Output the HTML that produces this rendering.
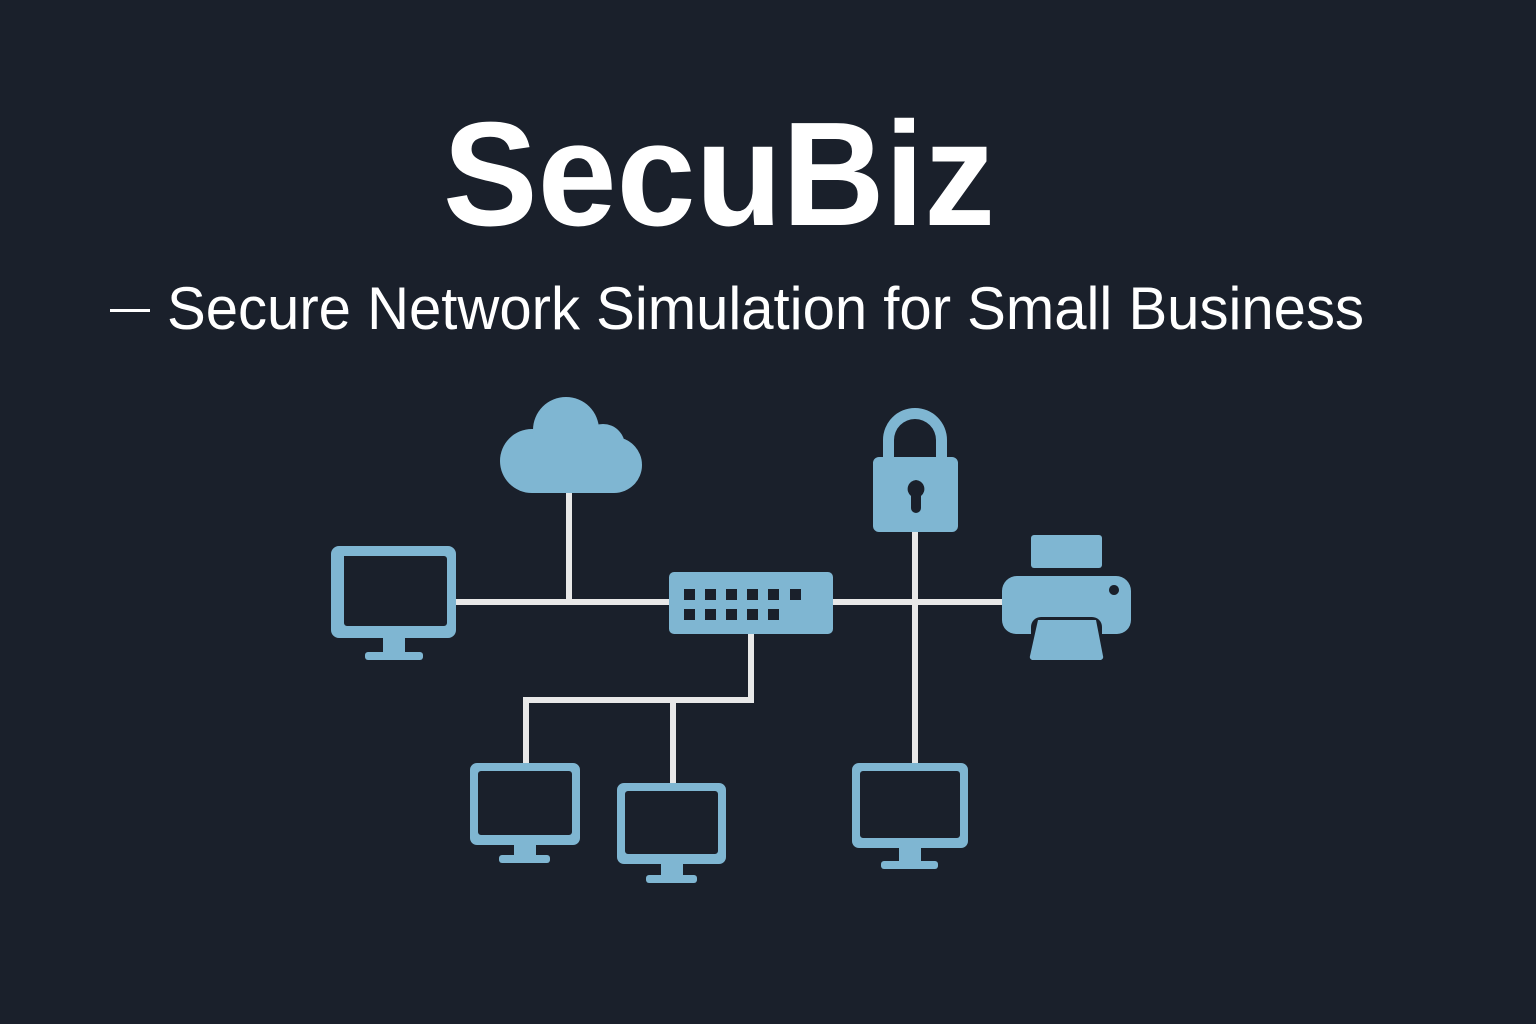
<!DOCTYPE html>
<html><head><meta charset="utf-8"><style>
html,body{margin:0;padding:0;background:#1a202b;}
svg{display:block}
</style></head><body>
<svg width="1536" height="1024" viewBox="0 0 1536 1024" xmlns="http://www.w3.org/2000/svg">
<rect width="1536" height="1024" fill="#1a202b"/>
<text x="443" y="225" font-family="Liberation Sans, sans-serif" font-weight="bold" font-size="148" fill="#ffffff" textLength="552" lengthAdjust="spacingAndGlyphs">SecuBiz</text>
<rect x="110" y="309" width="40" height="3" fill="#ffffff"/>
<text x="167" y="329" font-family="Liberation Sans, sans-serif" font-size="60" fill="#ffffff" textLength="1197" lengthAdjust="spacingAndGlyphs">Secure Network Simulation for Small Business</text>

<g stroke="#e8e8e8" stroke-width="6" fill="none">
<line x1="569" y1="490" x2="569" y2="602"/>
<line x1="455" y1="602" x2="672" y2="602"/>
<line x1="830" y1="602" x2="1005" y2="602"/>
<line x1="915" y1="530" x2="915" y2="765"/>
<polyline points="751,632 751,700 526,700 526,765"/>
<line x1="673" y1="700" x2="673" y2="785"/>
</g>

<g fill="#7fb6d2">
<!-- cloud -->
<circle cx="532" cy="461" r="32"/>
<circle cx="566" cy="430" r="33"/>
<circle cx="603" cy="446" r="22"/>
<circle cx="614" cy="465" r="28"/>
<rect x="532" y="445" width="82" height="48"/>
<!-- left monitor -->
<path fill-rule="evenodd" d="M339,546 H448 A8,8 0 0 1 456,554 V630 A8,8 0 0 1 448,638 H339 A8,8 0 0 1 331,630 V554 A8,8 0 0 1 339,546 Z M344,556 V623 A3,3 0 0 0 347,626 H444 A3,3 0 0 0 447,623 V559 A3,3 0 0 0 444,556 Z"/>
<rect x="383" y="637" width="22" height="17"/>
<rect x="365" y="652" width="58" height="8" rx="3"/>
<!-- switch -->
<rect x="669" y="572" width="164" height="62" rx="5"/>
<!-- lock -->
<path d="M883,460 V440 A32,32 0 0 1 947,440 V460 H936 V440 A21,21 0 0 0 894,440 V460 Z"/>
<path fill-rule="evenodd" d="M879,457 H952 A6,6 0 0 1 958,463 V526 A6,6 0 0 1 952,532 H879 A6,6 0 0 1 873,526 V463 A6,6 0 0 1 879,457 Z M916,480 A9,9 0 0 0 911,496 V508 A4,4 0 0 0 921,508 V496 A9,9 0 0 0 916,480 Z"/>
<!-- printer -->
<rect x="1031" y="535" width="71" height="33" rx="3"/>
<path fill-rule="evenodd" d="M1017,576 H1116 A15,15 0 0 1 1131,591 V620 A14,14 0 0 1 1117,634 H1102 V627 A10,10 0 0 0 1092,617 H1041 A10,10 0 0 0 1031,627 V634 H1016 A14,14 0 0 1 1002,620 V591 A15,15 0 0 1 1017,576 Z M1114,585 A5,5 0 1 0 1114.01,585 Z"/>
<path d="M1038,620 H1096 L1103,656 A3,3 0 0 1 1100,660 H1033 A3,3 0 0 1 1030,656 Z"/>
<!-- bottom monitors -->
<path fill-rule="evenodd" d="M477,763 H573 A7,7 0 0 1 580,770 V838 A7,7 0 0 1 573,845 H477 A7,7 0 0 1 470,838 V770 A7,7 0 0 1 477,763 Z M481,771 A3,3 0 0 0 478,774 V832 A3,3 0 0 0 481,835 H569 A3,3 0 0 0 572,832 V774 A3,3 0 0 0 569,771 Z"/>
<rect x="514" y="844" width="22" height="13"/>
<rect x="499" y="855" width="51" height="8" rx="3"/>
<path fill-rule="evenodd" d="M624,783 H719 A7,7 0 0 1 726,790 V857 A7,7 0 0 1 719,864 H624 A7,7 0 0 1 617,857 V790 A7,7 0 0 1 624,783 Z M628,791 A3,3 0 0 0 625,794 V851 A3,3 0 0 0 628,854 H715 A3,3 0 0 0 718,851 V794 A3,3 0 0 0 715,791 Z"/>
<rect x="661" y="863" width="22" height="14"/>
<rect x="646" y="875" width="51" height="8" rx="3"/>
<path fill-rule="evenodd" d="M859,763 H961 A7,7 0 0 1 968,770 V841 A7,7 0 0 1 961,848 H859 A7,7 0 0 1 852,841 V770 A7,7 0 0 1 859,763 Z M863,771 A3,3 0 0 0 860,774 V835 A3,3 0 0 0 863,838 H957 A3,3 0 0 0 960,835 V774 A3,3 0 0 0 957,771 Z"/>
<rect x="899" y="847" width="22" height="16"/>
<rect x="881" y="861" width="57" height="8" rx="3"/>
</g>
<g fill="#1a202b">
<rect x="684" y="589" width="11" height="11"/><rect x="705" y="589" width="11" height="11"/><rect x="726" y="589" width="11" height="11"/><rect x="747" y="589" width="11" height="11"/><rect x="768" y="589" width="11" height="11"/><rect x="790" y="589" width="11" height="11"/>
<rect x="684" y="609" width="11" height="11"/><rect x="705" y="609" width="11" height="11"/><rect x="726" y="609" width="11" height="11"/><rect x="747" y="609" width="11" height="11"/><rect x="768" y="609" width="11" height="11"/>
</g>
</svg>
</body></html>
